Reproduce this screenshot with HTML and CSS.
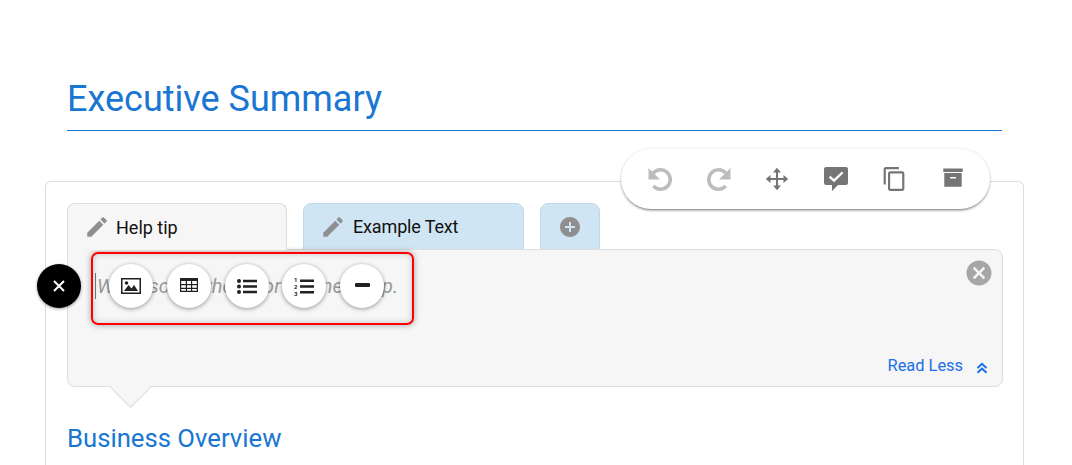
FILE: index.html
```html
<!DOCTYPE html>
<html lang="en">
<head>
  <meta charset="UTF-8">
  <title>Executive Summary</title>
  <link rel="stylesheet" href="styles.css">
</head>
<body>
  <div class="page">
    <h1 class="page-title">Executive Summary</h1>

    <div class="card">
      <!-- FLOATING TOOLBAR -->
      <div class="toolbar">
        <svg class="icon-light" viewBox="0 0 24 24"><path class="arc" d="M5.200 6.200A9.700 9.700 0 1 1 5.400 19"/><path d="M.5 1v11.500H12z"/></svg>
        <svg class="icon-light" viewBox="0 0 24 24"><path class="arc" d="M18.800 6.200A9.700 9.700 0 1 0 18.600 19"/><path d="M23.500 1v11.500H12z"/></svg>
        <svg class="icon-dark" viewBox="0 0 24 24"><path d="M11 5.500h2v5.500h5.500V8l4.700 4-4.700 4v-3H13v5.500h3L12 23.200 8 18.500h3V13H5.500v3L.8 12l4.700-4v3H11V5.500H8L12 .8l4 4.700z"/></svg>
        <svg class="icon-dark" viewBox="0 0 24 24"><path d="M2 0h20a2 2 0 0 1 2 2v14a2 2 0 0 1-2 2h-8l-6 6v-6H2a2 2 0 0 1-2-2V2a2 2 0 0 1 2-2zm8 15.200 9.500-9.200-1.600-1.600-7.900 7.600-3.700-3.300-1.500 1.700z" fill-rule="evenodd"/></svg>
        <svg class="icon-dark" viewBox="0.5 1 22 22"><path d="M16 1H4c-1.100 0-2 .9-2 2v14h2V3h12V1zm3 4H8c-1.100 0-2 .9-2 2v14c0 1.100.9 2 2 2h11c1.100 0 2-.9 2-2V7c0-1.100-.9-2-2-2zm0 16H8V7h11v14z"/></svg>
        <svg class="icon-dark" viewBox="0 0 24 24"><path d="M2.300 1.500h19.400V5H2.300zM3.300 6h17.400v13.700H3.300zM9 10v1.600h6V10z" fill-rule="evenodd"/></svg>
      </div>

      <div class="tabs">
        <div class="tab tab-help">
          <svg class="tab-icon" viewBox="0 0 24 24"><path d="M3 17.250V21h3.750L17.810 9.940l-3.750-3.750L3 17.250zM20.710 7.040c.39-.39.39-1.020 0-1.410l-2.340-2.340c-.39-.39-1.020-.39-1.410 0l-1.830 1.830 3.750 3.750 1.830-1.830z"/></svg>
          Help tip
        </div>
        <div class="tab tab-example">
          <svg class="tab-icon" viewBox="0 0 24 24"><path d="M3 17.250V21h3.750L17.810 9.940l-3.750-3.750L3 17.250zM20.710 7.040c.39-.39.39-1.020 0-1.410l-2.340-2.340c-.39-.39-1.020-.39-1.410 0l-1.830 1.830 3.750 3.750 1.830-1.830z"/></svg>
          Example Text
        </div>
        <div class="tab tab-add">
          <svg class="add-icon" viewBox="0 0 24 24"><path d="M12 2C6.480 2 2 6.480 2 12s4.480 10 10 10 10-4.480 10-10S17.520 2 12 2zm5 11h-4v4h-2v-4H7v-2h4V7h2v4h4v2z"/></svg>
        </div>
      </div>

      <div class="panel">
        <p class="panel-text">Write somewhere for the need tip.</p>
        <svg class="panel-close" viewBox="0 0 24 24"><path d="M12 2C6.470 2 2 6.470 2 12s4.470 10 10 10 10-4.470 10-10S17.530 2 12 2zm5 13.590L15.590 17 12 13.410 8.410 17 7 15.590 10.590 12 7 8.410 8.410 7 12 10.590 15.590 7 17 8.410 13.410 12 17 15.590z"/></svg>
        <div class="read-less">
          Read Less
          <svg class="read-icon" viewBox="0 0 12 12"><path d="M1.500 6 6 1.800 10.500 6M1.500 10.800 6 6.600l4.500 4.200"/></svg>
        </div>

        <!-- INSERT MENU -->
        <div class="insert-close">
          <svg viewBox="0 0 14 14"><path d="M2 2l10 10M12 2 2 12"/></svg>
        </div>
        <div class="insert-menu">
          <div class="insert-btn">
            <svg class="insert-icon" viewBox="0 0 20 16"><path d="M0 0h20v16H0zm1.500 1.500v13h17v-13zM3 13l4.500-6 3 3.500 2.500-3.500 4 6zM5.500 3.200a1.800 1.800 0 1 1 0 3.600 1.800 1.800 0 0 1 0-3.600z" fill-rule="evenodd"/></svg>
          </div>
          <div class="insert-btn">
            <svg class="insert-icon table-icon" viewBox="0 0 18 14"><path d="M0 0h18v14H0zm1.200 3v3h4.600V3zm5.800 0v3h4V3zm5.200 0v3h4.600V3zM1.200 7.200v2.600h4.600V7.200zm5.800 0v2.600h4V7.200zm5.200 0v2.600h4.600V7.200zM1.200 11v1.800h4.600V11zM7 11v1.800h4V11zm5.200 0v1.800h4.600V11z" fill-rule="evenodd"/></svg>
          </div>
          <div class="insert-btn">
            <svg class="insert-icon list-icon" viewBox="0 0 20 15"><circle cx="2" cy="2" r="2"/><circle cx="2" cy="7.500" r="2"/><circle cx="2" cy="13" r="2"/><path d="M6 .7h14v2.600H6zM6 6.200h14v2.600H6zM6 11.700h14v2.600H6z"/></svg>
          </div>
          <div class="insert-btn">
            <svg class="insert-icon num-icon" viewBox="0 0 20 19"><text x="0" y="4.800" class="list-num">1</text><text x="0" y="11.900" class="list-num">2</text><text x="0" y="19" class="list-num">3</text><path d="M6 2.400h14v2.600H6zM6 8.200h14v2.600H6zM6 14h14v2.600H6z"/></svg>
          </div>
          <div class="insert-btn">
            <div class="dash"></div>
          </div>
        </div>
        <div class="insert-frame"></div>
      </div>

      <div class="panel-arrow"></div>

      <h2 class="section-title">Business Overview</h2>
    </div>
  </div>
</body>
</html>
```

FILE: styles.css
```css
html, body {
  margin: 0;
  height: 465px;
  overflow: hidden;
  background-color: white;
}

body {
  font-family: Roboto, "Liberation Sans", sans-serif;
  color: #111;
}

.page {
  padding-top: 75px;
}

.page-title {
  margin: 0 70px 0 67px;
  padding-bottom: 6px;
  border-bottom: 1px solid #1976d2;
  color: #1976d2;
  font-size: 36px;
  line-height: 49px;
  font-weight: 400;
}

.card {
  position: relative;
  margin: 50px 48px 0 45px;
  height: 283px;
  padding: 21px 20px 0 21px;
  border: 1px solid #ddd;
  border-bottom: none;
  border-radius: 6px 6px 0 0;
}

.toolbar {
  position: absolute;
  top: -33px;
  right: 33px;
  width: 369px;
  height: 60px;
  box-sizing: border-box;
  padding: 0 25px 0 27px;
  display: flex;
  justify-content: space-between;
  align-items: center;
  background-color: white;
  border-radius: 30px;
  box-shadow: 0 2px 3px -1px rgba(0,0,0,0.55), 0 0 3px rgba(0,0,0,0.12);
  z-index: 3;
}

.toolbar svg {
  width: 24px;
  height: 24px;
}

.icon-light {
  fill: #bdbdbd;
}

.icon-dark {
  fill: #757575;
}

.arc {
  fill: none;
  stroke: #bdbdbd;
  stroke-width: 3.600;
}

.tabs {
  display: flex;
  gap: 16px;
  height: 46px;
}

.tab {
  display: flex;
  align-items: center;
  gap: 6px;
  box-sizing: border-box;
  height: 47px;
  padding: 0 0 0 16px;
  border: 1px solid #ddd;
  border-radius: 8px 8px 0 0;
  font-size: 18px;
  position: relative;
}

.tab-help {
  width: 220px;
  background-color: #f6f6f6;
  border-bottom: none;
  z-index: 1;
}

.tab-example {
  width: 221px;
  gap: 7px;
  letter-spacing: -0.15px;
  background-color: #d0e5f3;
  border-color: #bfd9ea;
}

.tab-add {
  width: 60px;
  padding: 0 0 0 17px;
  background-color: #d0e5f3;
  border-color: #bfd9ea;
}

.tab-icon {
  width: 26px;
  height: 26px;
  fill: #8f8f8f;
}

.add-icon {
  width: 24px;
  height: 24px;
  fill: #8f8f8f;
}

.panel {
  position: relative;
  box-sizing: border-box;
  height: 138px;
  padding: 23px 28px;
  background-color: #f6f6f6;
  border: 1px solid #ddd;
  border-radius: 0 8px 8px 8px;
}

.panel-text {
  margin: 0 0 0 -1px;
  padding-left: 1px;
  border-left: 1px solid #777;
  width: fit-content;
  font-size: 20px;
  line-height: 26px;
  font-style: italic;
  word-spacing: 2px;
  color: #999;
}

.panel-close {
  position: absolute;
  top: 8px;
  right: 8px;
  width: 30px;
  height: 30px;
  fill: #a6a6a6;
}

.read-less {
  position: absolute;
  right: 14px;
  bottom: 11px;
  display: flex;
  align-items: center;
  gap: 13px;
  font-size: 16.400px;
  color: #1a6fe8;
}

.read-icon {
  width: 12px;
  height: 12px;
  margin-top: 5px;
  fill: none;
  stroke: #1a6fe8;
  stroke-width: 2;
}

.insert-close {
  position: absolute;
  top: 14px;
  left: -31px;
  width: 44px;
  height: 44px;
  display: flex;
  align-items: center;
  justify-content: center;
  background-color: black;
  border-radius: 50%;
  box-shadow: 0 1px 3px rgba(0,0,0,0.4);
}

.insert-close svg {
  width: 14px;
  height: 14px;
  fill: none;
  stroke: white;
  stroke-width: 2;
}

.insert-menu {
  position: absolute;
  top: 14px;
  left: 41px;
  display: flex;
  gap: 13.750px;
}

.insert-btn {
  width: 44px;
  height: 44px;
  display: flex;
  align-items: center;
  justify-content: center;
  background-color: white;
  border-radius: 50%;
  box-shadow: 0 1px 4px rgba(0,0,0,0.4);
}

.insert-icon {
  width: 20px;
  height: 16px;
  fill: #212121;
}

.table-icon {
  width: 18px;
  height: 14px;
  margin-bottom: 2px;
}

.list-icon {
  width: 20px;
  height: 15px;
}

.num-icon {
  width: 20px;
  height: 19px;
  overflow: visible;
}

.list-num {
  font-family: Roboto, sans-serif;
  font-size: 6px;
  font-weight: 700;
}

.dash {
  width: 15px;
  height: 4px;
  margin-bottom: 2px;
  background-color: #212121;
  border-radius: 1px;
}

.insert-frame {
  position: absolute;
  top: 2px;
  left: 23px;
  width: 323px;
  height: 73px;
  box-sizing: border-box;
  border: 2px solid #f00;
  border-radius: 7px;
  box-shadow: 0 0 6px rgba(0,0,0,0.35), inset 0 0 6px rgba(0,0,0,0.2);
  pointer-events: none;
}

.panel-arrow {
  position: absolute;
  left: 70px;
  top: 191px;
  width: 29px;
  height: 29px;
  box-sizing: border-box;
  background-color: #f6f6f6;
  border-right: 1px solid #ddd;
  border-bottom: 1px solid #ddd;
  transform: rotate(45deg);
}

.section-title {
  margin: 35px 0 0 0;
  color: #1976d2;
  font-size: 25.700px;
  line-height: 32px;
  font-weight: 400;
}
```
